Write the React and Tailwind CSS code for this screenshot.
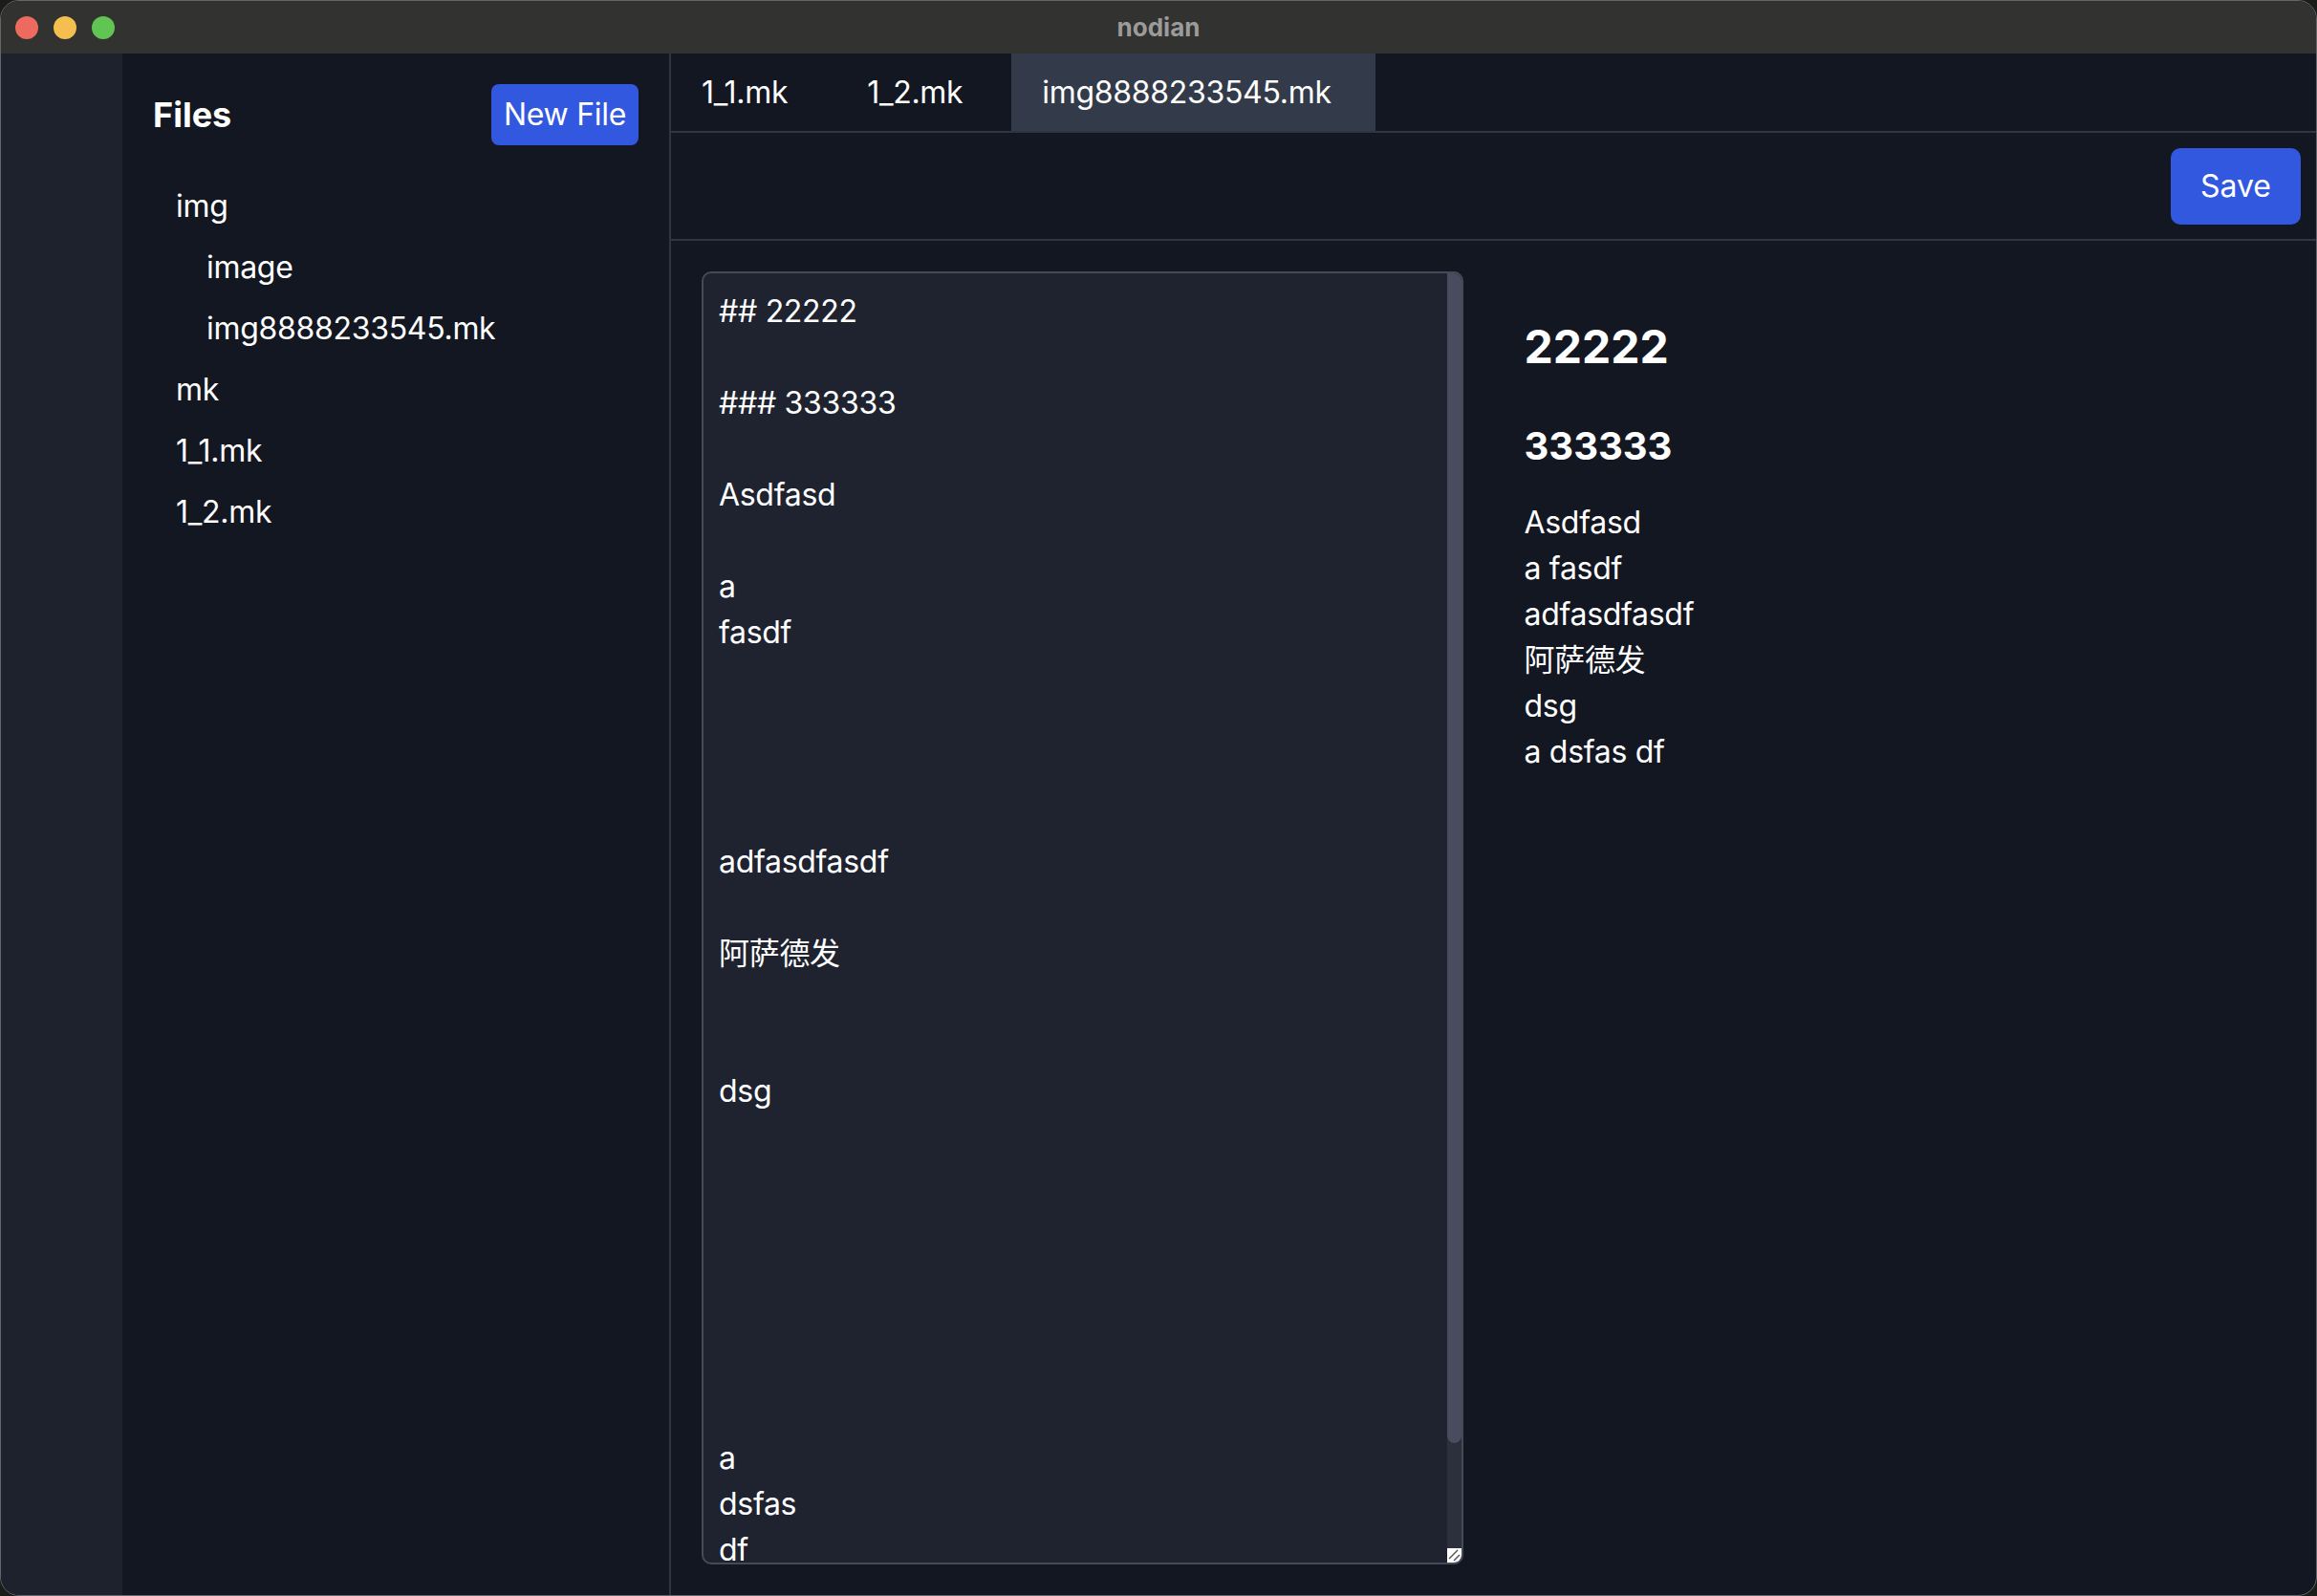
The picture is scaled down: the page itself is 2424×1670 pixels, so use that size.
import React from "react";

const editorText = `## 22222

### 333333

Asdfasd

a
fasdf




adfasdfasdf

阿萨德发


dsg







a
dsfas
df`;

function TreeItem({ label, nested }) {
  return (
    <div className={"h-[64px] flex items-center text-[32px] leading-[48px] tracking-[-0.3px] text-white " + (nested ? "pl-[56px]" : "pl-[24px]")}>
      {label}
    </div>
  );
}

export default function App() {
  return (
    <div className="w-[2424px] h-[1670px] bg-[#1b1d18] font-[Inter,'Noto_Sans_CJK_SC',sans-serif]">
      <div className="w-full h-full rounded-[20px] overflow-hidden border border-[#66666a] flex flex-col bg-[#131722]">
        {/* Title bar */}
        <div className="h-[55px] shrink-0 bg-[#323230] relative flex items-center justify-center">
          <div className="absolute left-[15px] top-[16px] flex gap-[16px]">
            <div className="w-[24px] h-[24px] rounded-full bg-[#ec6a5e]" />
            <div className="w-[24px] h-[24px] rounded-full bg-[#f4bf4f]" />
            <div className="w-[24px] h-[24px] rounded-full bg-[#61c554]" />
          </div>
          <div className="text-[26px] font-bold text-[#9b9b9b]">nodian</div>
        </div>

        <div className="flex flex-1 min-h-0">
          {/* Left strip */}
          <div className="w-[127px] shrink-0 bg-[#1e222d]" />

          {/* Sidebar */}
          <div className="w-[574px] shrink-0 border-r-2 border-[#2f3541] p-[32px] flex flex-col">
            <div className="h-[64px] flex items-center justify-between">
              <div className="text-[36px] font-bold text-white">Files</div>
              <button className="h-[64px] px-[13px] rounded-[8px] bg-[#3358e0] text-white text-[32px] leading-[48px] tracking-[-0.3px]">
                New File
              </button>
            </div>
            <div className="mt-[32px] flex flex-col">
              <TreeItem label="img" />
              <TreeItem label="image" nested />
              <TreeItem label="img8888233545.mk" nested />
              <TreeItem label="mk" />
              <TreeItem label="1_1.mk" />
              <TreeItem label="1_2.mk" />
            </div>
          </div>

          {/* Main */}
          <div className="flex-1 min-w-0 flex flex-col">
            {/* Tabs */}
            <div className="h-[83px] shrink-0 border-b-2 border-[#2f3541] flex gap-[19px] tracking-[-0.3px]">
              <div className="h-full px-[32px] flex items-center text-[32px] text-white">1_1.mk</div>
              <div className="h-full px-[32px] flex items-center text-[32px] text-white">1_2.mk</div>
              <div className="h-full pl-[32px] pr-[46px] flex items-center text-[32px] text-white bg-[#333a49]">img8888233545.mk</div>
            </div>

            {/* Toolbar */}
            <div className="h-[113px] shrink-0 border-b-2 border-[#2f3541] flex items-center justify-end pr-[16px]">
              <button className="h-[80px] px-[31px] rounded-[10px] bg-[#3358e0] text-white text-[32px] leading-[48px]">
                Save
              </button>
            </div>

            {/* Editor + preview */}
            <div className="flex-1 min-h-0 p-[32px] grid grid-cols-2 gap-[64px]">
              <div className="relative h-full rounded-[10px] border-2 border-[#454a57] bg-[#1f2330] overflow-hidden">
                <div className="h-full overflow-hidden pl-[16px] pr-[32px] pt-[16px] text-[32px] leading-[48px] tracking-[-0.3px] text-white whitespace-pre">
                  {editorText}
                </div>
                {/* fake scrollbar */}
                <div className="absolute right-0 top-0 bottom-0 w-[15px] bg-[#2b303c]">
                  <div className="h-[1224px] w-full bg-[#474d5e] rounded-b-[8px]" />
                </div>
                {/* resizer */}
                <div className="absolute right-0 bottom-0 w-[15px] h-[15px] bg-white">
                  <svg width="15" height="15" viewBox="0 0 15 15">
                    <line x1="2" y1="11" x2="11" y2="2" stroke="#555" strokeWidth="1.5" />
                    <line x1="7" y1="13" x2="13" y2="7" stroke="#555" strokeWidth="1.5" />
                  </svg>
                </div>
              </div>

              <div className="pt-[47px] text-white">
                <h2 className="text-[48px] leading-[64px] font-bold">22222</h2>
                <h3 className="mt-[44px] text-[40px] leading-[56px] font-bold">333333</h3>
                <div className="mt-[28px] text-[32px] leading-[48px] tracking-[-0.3px]">
                  <div>Asdfasd</div>
                  <div>a fasdf</div>
                  <div>adfasdfasdf</div>
                  <div>阿萨德发</div>
                  <div>dsg</div>
                  <div>a dsfas df</div>
                </div>
              </div>
            </div>
          </div>
        </div>
      </div>
    </div>
  );
}
